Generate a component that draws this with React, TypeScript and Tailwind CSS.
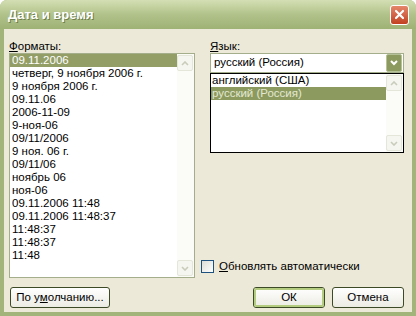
import { ReactNode } from 'react';

const formats = [
    '09.11.2006',
    'четверг, 9 ноября 2006 г.',
    '9 ноября 2006 г.',
    '09.11.06',
    '2006-11-09',
    '9-ноя-06',
    '09/11/2006',
    '9 ноя. 06 г.',
    '09/11/06',
    'ноябрь 06',
    'ноя-06',
    '09.11.2006 11:48',
    '09.11.2006 11:48:37',
    '11:48:37',
    '11:48:37',
    '11:48',
];

const languages = ['английский (США)', 'русский (Россия)'];

// faint arrow used by the disabled scroll buttons
const ScrollButton = ({ down }: { down?: boolean }) => (
    <div className="flex h-[16px] w-[16px] items-center justify-center rounded-[2px] border border-[#e3e6d8] bg-[#f5f6f0]">
        <svg width="8" height="5" viewBox="0 0 8 5">
            <path
                d={down ? 'M1 1 L4 4 L7 1' : 'M1 4 L4 1 L7 4'}
                fill="none"
                stroke="#c8ccbb"
                strokeWidth="1.6"
            />
        </svg>
    </div>
);

const ScrollBar = () => (
    <div className="flex w-[17px] flex-col justify-between bg-[#fbfbf8] py-[1px] pr-[1px]">
        <ScrollButton />
        <ScrollButton down />
    </div>
);

const Button = ({ children, isDefault, width }: { children: ReactNode, isDefault?: boolean, width: string }) => (
    <div className={`flex h-[21px] ${width} items-center justify-center rounded-[3px] border border-[#3d4a26] bg-gradient-to-b from-[#ffffff] to-[#ecebe3]`}>
        <div className={`flex h-full w-full items-center justify-center rounded-[2px] ${isDefault ? 'border-2 border-[#b3cc7f]' : ''}`}>
            {children}
        </div>
    </div>
);

export default function App() {
    return (
        <div className="flex h-[316px] w-[416px] flex-col overflow-hidden rounded-t-[7px] bg-[#a3b47b] font-['Liberation_Sans',Arial,sans-serif] text-[11.5px] text-black">
            {/* title bar */}
            <div className="flex h-[29px] items-center justify-between bg-gradient-to-b from-[#d4dfb3] via-[#b1c28a] to-[#9fb275] pl-[8px] pr-[7px]">
                <span className="text-[13px] font-bold text-white [text-shadow:1px_1px_0_#6e7f4c]">Дата и время</span>
                <div className="flex h-[20px] w-[19px] items-center justify-center rounded-[3px] border border-white bg-gradient-to-b from-[#e4866a] to-[#c1401f]">
                    <svg width="11" height="11" viewBox="0 0 11 11">
                        <path d="M2 2 L9 9 M9 2 L2 9" stroke="white" strokeWidth="2.2" strokeLinecap="round" />
                    </svg>
                </div>
            </div>

            <div className="mx-[4px] mb-[4px] flex flex-1 flex-col bg-[#ece9d8] pl-[5px] pr-[8px] pt-[10px]">
                <div className="flex h-[239px] gap-[6px]">
                    {/* formats */}
                    <div className="flex w-[186px] flex-col">
                        <div className="h-[14px] leading-[14px]"><u>Ф</u>орматы:</div>
                        <div className="flex h-[225px] border border-[#a5ae8a] bg-white">
                            <div className="flex-1">
                                {formats.map((f, i) => (
                                    <div
                                        key={i}
                                        className={`h-[13px] pl-[2px] leading-[13px] whitespace-nowrap ${i === 0 ? 'bg-[#939e66] text-white' : ''}`}
                                    >
                                        {f}
                                    </div>
                                ))}
                            </div>
                            <ScrollBar />
                        </div>
                    </div>

                    {/* language */}
                    <div className="flex w-[203px] flex-col">
                        <div className="ml-[9px] h-[14px] leading-[14px]"><u>Я</u>зык:</div>
                        <div className="ml-[9px] flex h-[20px] items-center justify-between border border-[#a5ae8a] bg-white pl-[3px] pr-[1px]">
                            <span>русский (Россия)</span>
                            <div className="flex h-[18px] w-[16px] items-center justify-center rounded-[2px] border border-[#b5c196] bg-[#8c9a5f]">
                                <svg width="8" height="6" viewBox="0 0 8 6">
                                    <path d="M1 1 L4 4 L7 1" fill="none" stroke="white" strokeWidth="2" />
                                </svg>
                            </div>
                        </div>
                        <div className="ml-[9px] flex h-[80px] border border-black bg-white">
                            <div className="flex-1">
                                {languages.map((l, i) => (
                                    <div
                                        key={i}
                                        className={`h-[13px] pl-[1px] leading-[13px] ${i === 1 ? 'bg-[#8c9a5f] text-[#e3e8d2]' : ''}`}
                                    >
                                        {l}
                                    </div>
                                ))}
                            </div>
                            <ScrollBar />
                        </div>

                        <div className="mb-[3px] mt-auto flex items-center gap-[5px]">
                            <div className="h-[13px] w-[13px] border border-[#1c5180] bg-gradient-to-br from-[#dcdcd7] to-[#ffffff]" />
                            <span><u>О</u>бновлять автоматически</span>
                        </div>
                    </div>
                </div>

                {/* buttons */}
                <div className="mt-[9px] flex items-center">
                    <div className="ml-[1px]">
                        <Button width="w-[100px]">По у<u>м</u>олчанию...</Button>
                    </div>
                    <div className="ml-auto flex gap-[7px]">
                        <Button width="w-[72px]" isDefault>ОК</Button>
                        <Button width="w-[72px]">Отмена</Button>
                    </div>
                </div>
            </div>
        </div>
    );
}
